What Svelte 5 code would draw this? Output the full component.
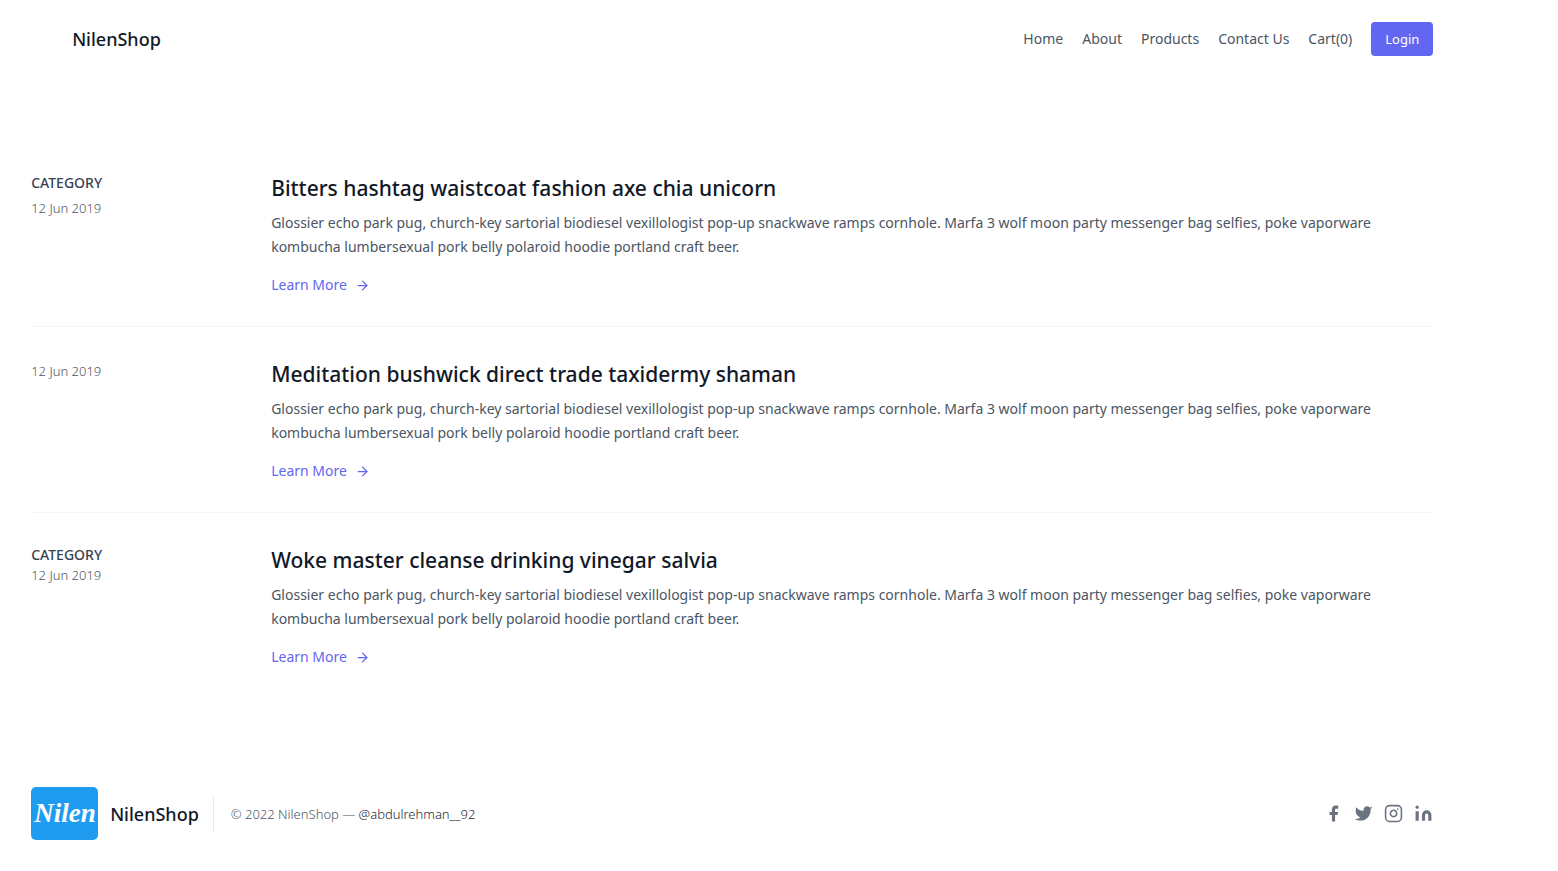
<script>
  const links = ['Home', 'About', 'Products', 'Contact Us', 'Cart(0)'];
  const text =
    'Glossier echo park pug, church-key sartorial biodiesel vexillologist pop-up snackwave ramps cornhole. Marfa 3 wolf moon party messenger bag selfies, poke vaporware kombucha lumbersexual pork belly polaroid hoodie portland craft beer.';
  const posts = [
    { category: 'CATEGORY', spaced: true, date: '12 Jun 2019', title: 'Bitters hashtag waistcoat fashion axe chia unicorn' },
    { category: '', date: '12 Jun 2019', title: 'Meditation bushwick direct trade taxidermy shaman' },
    { category: 'CATEGORY', date: '12 Jun 2019', title: 'Woke master cleanse drinking vinegar salvia' }
  ];
</script>

<div class="page">
  <header>
    <a class="brand" href="#home">NilenShop</a>
    <nav>
      {#each links as link}
        <a href="#{link}">{link}</a>
      {/each}
    </nav>
    <button type="button">Login</button>
  </header>

  <main>
    {#each posts as post}
      <article>
        <div class="meta" class:spaced={post.spaced} class:alone={!post.category}>
          {#if post.category}<span class="category">{post.category}</span>{/if}
          <span class="date">{post.date}</span>
        </div>
        <div class="body">
          <h2>{post.title}</h2>
          <p>{text}</p>
          <a class="more" href="#more">
            Learn More
            <svg viewBox="0 0 24 24" width="15" height="15" fill="none" stroke="currentColor" stroke-width="2" stroke-linecap="round" stroke-linejoin="round" aria-hidden="true">
              <path d="M5 12h14" /><path d="M12 5l7 7-7 7" />
            </svg>
          </a>
        </div>
      </article>
    {/each}
  </main>

  <footer>
    <a class="foot-brand" href="#home">
      <svg class="logo" viewBox="0 0 67 53" width="67" height="53" aria-hidden="true">
        <rect width="67" height="53" rx="5" fill="#1f9cf0" />
        <text x="34" y="35" text-anchor="middle">Nilen</text>
      </svg>
      <span>NilenShop</span>
    </a>
    <p class="copy">© 2022 NilenShop — <a href="#author">@abdulrehman__92</a></p>
    <div class="social">
      <a href="#facebook" aria-label="Facebook">
        <svg viewBox="0 0 24 24" fill="currentColor"><path d="M18 2h-3a5 5 0 00-5 5v3H7v4h3v8h4v-8h3l1-4h-4V7a1 1 0 011-1h3z" /></svg>
      </a>
      <a href="#twitter" aria-label="Twitter">
        <svg viewBox="0 0 24 24" fill="currentColor"><path d="M23 3a10.9 10.9 0 01-3.14 1.53 4.48 4.48 0 00-7.86 3v1A10.66 10.66 0 013 4s-4 9 5 13a11.64 11.64 0 01-7 2c9 5 20 0 20-11.5a4.5 4.5 0 00-.08-.83A7.72 7.72 0 0023 3z" /></svg>
      </a>
      <a href="#instagram" aria-label="Instagram">
        <svg viewBox="0 0 24 24" fill="none" stroke="currentColor" stroke-width="2" stroke-linecap="round" stroke-linejoin="round"><rect width="20" height="20" x="2" y="2" rx="5" /><path d="M16 11.37A4 4 0 1112.63 8 4 4 0 0116 11.37zm1.5-4.87h.01" /></svg>
      </a>
      <a href="#linkedin" aria-label="LinkedIn">
        <svg viewBox="0 0 24 24" fill="currentColor"><path d="M16 8a6 6 0 016 6v7h-4v-7a2 2 0 00-2-2 2 2 0 00-2 2v7h-4v-7a6 6 0 016-6zM2 9h4v12H2z" /><circle cx="4" cy="4" r="2" /></svg>
      </a>
    </div>
  </footer>
</div>

<style>
  :global(body) {
    margin: 0;
    background: #fff;
  }
  .page {
    font-family: 'Noto Sans', 'Open Sans', sans-serif;
    font-size: 14px;
    line-height: 24px;
    color: #4b5563;
    padding: 0 8% 0 2%;
  }
  a {
    color: inherit;
    text-decoration: none;
  }
  header {
    display: flex;
    align-items: center;
    padding: 22px 0 22px 41px;
  }
  .brand,
  .foot-brand {
    font-size: 18px;
    font-weight: 500;
    color: #111827;
  }
  nav {
    display: flex;
    gap: 19px;
    margin-left: auto;
    margin-right: 19px;
  }
  button {
    font: inherit;
    font-size: 13px;
    line-height: 22px;
    padding: 6px 14px;
    border: 0;
    border-radius: 4px;
    color: #fff;
    background: #6366f1;
  }
  main {
    padding: 63px 0 59px;
  }
  article {
    display: flex;
    padding: 31px 0 29px;
  }
  article + article {
    border-top: 1px solid #f3f4f6;
  }
  .meta {
    display: flex;
    flex-direction: column;
    flex: 0 0 240px;
    padding-top: 1px;
    box-sizing: border-box;
    line-height: 20px;
  }
  .spaced {
    gap: 5px;
  }
  .alone {
    padding-top: 3px;
  }
  .category {
    font-weight: 500;
    color: #374151;
  }
  .date {
    font-size: 13px;
    font-weight: 300;
    color: #4b5563;
  }
  .body {
    flex: 1;
  }
  h2 {
    margin: 0 0 7px;
    font-size: 21px;
    font-weight: 500;
    line-height: 32px;
    color: #111827;
  }
  p {
    margin: 0;
  }
  .more {
    display: inline-flex;
    align-items: center;
    gap: 8px;
    margin-top: 14px;
    color: #6366f1;
  }
  footer {
    display: flex;
    align-items: center;
    padding: 30px 0;
  }
  .foot-brand {
    display: flex;
    align-items: center;
    gap: 12px;
  }
  .logo text {
    font: italic 700 27px 'Liberation Serif', serif;
    fill: #fff;
  }
  .copy {
    margin-left: 14px;
    padding-left: 17px;
    border-left: 1px solid #e5e7eb;
    font-size: 13px;
    font-weight: 300;
    line-height: 34px;
    color: #4b5563;
  }
  .copy a {
    color: #1f2937;
  }
  .social {
    display: flex;
    gap: 11px;
    margin-left: auto;
    color: #6b7280;
  }
  .social svg {
    display: block;
    width: 19px;
    height: 19px;
  }
</style>
